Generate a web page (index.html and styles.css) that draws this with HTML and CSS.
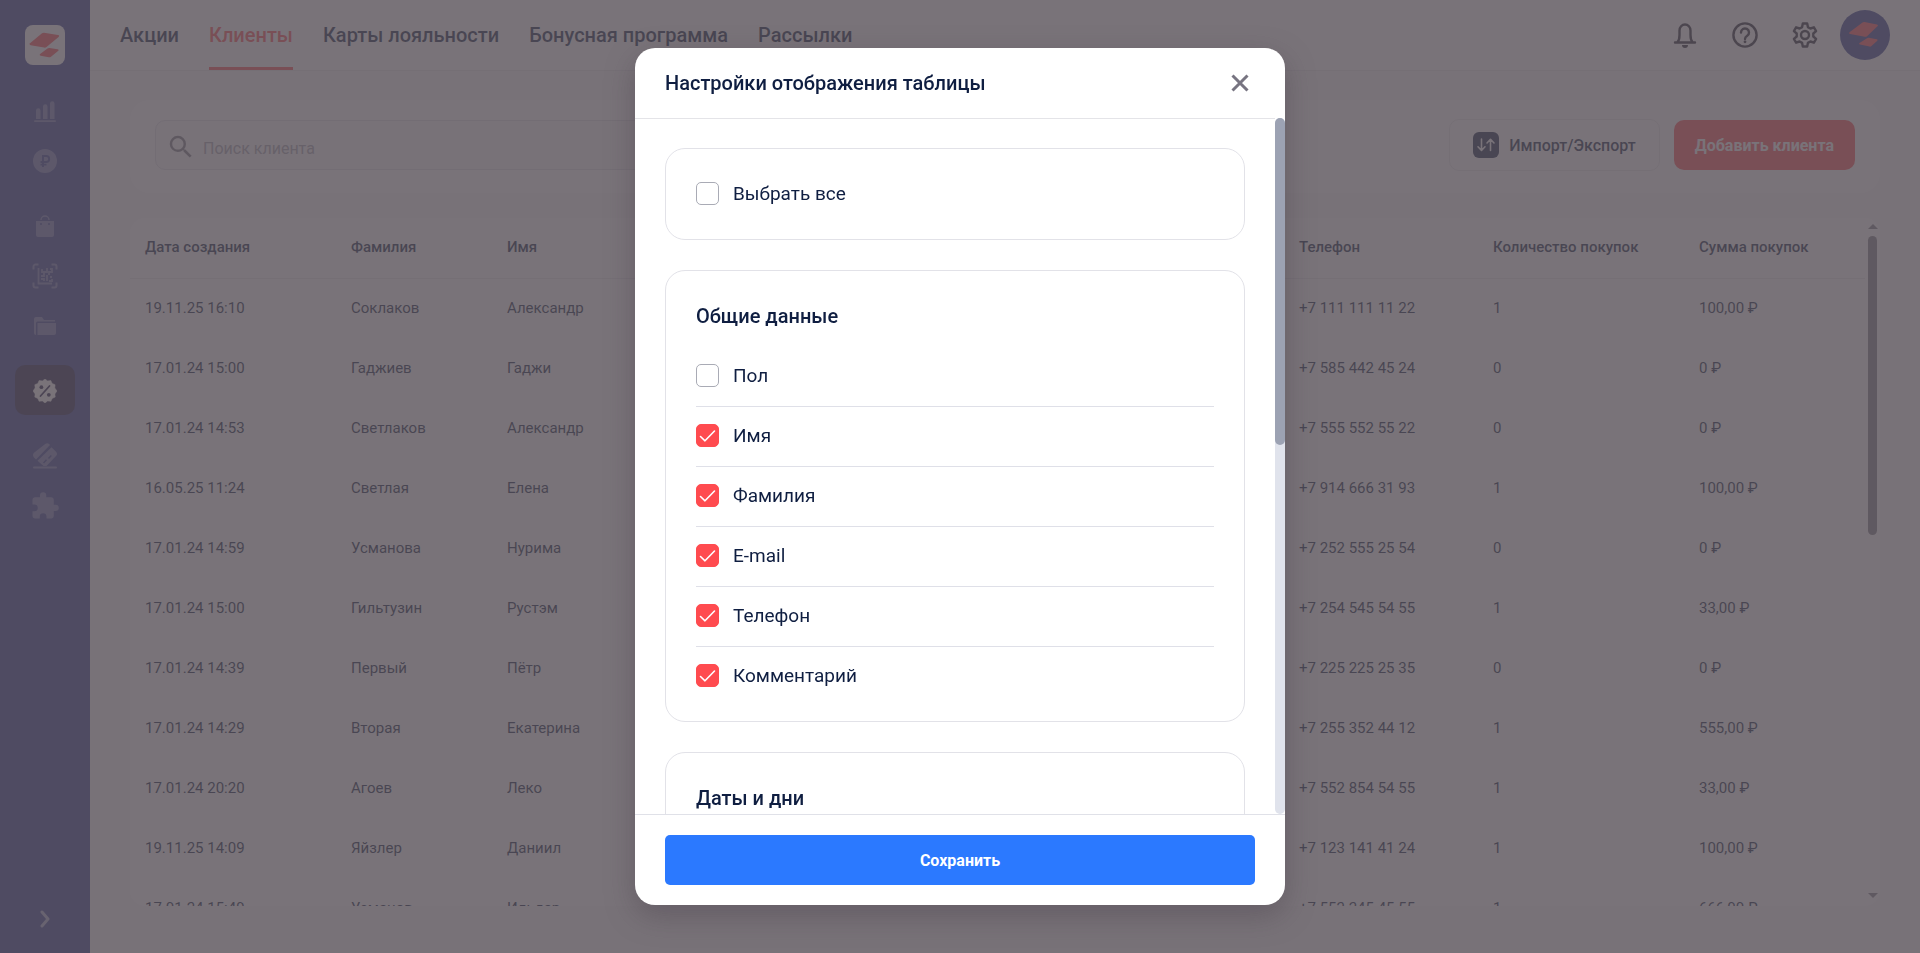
FILE: index.html
```html
<!DOCTYPE html>
<html lang="ru">
<head>
<meta charset="utf-8">
<title>Клиенты</title>
<link rel="stylesheet" href="styles.css">
</head>
<body>
<div class="app">
  <aside class="sidebar">
    <a class="logo" href="#" aria-label="Главная">
      <svg width="40" height="40" viewBox="0 0 40 40" fill="#ff4b4f"><path d="M17 8.200q1-.6 2-.5l14 2.200q2 .5.600 2L21.500 22q-1 .8-2.400.600L5.600 20.300Q3.800 19.800 5 18.300z"/><path d="M22.500 23.500q1-.7 2-.5l8 1.300q2 .5.500 1.800L26 31.700q-1 .8-2.300.600l-8-1.500q-2-.6-.6-1.800z"/></svg>
    </a>
    <nav class="side-nav">
      <div class="side-group">
        <a class="side-link" href="#" aria-label="Статистика"><svg width="24" height="24" viewBox="0 0 24 24" fill="currentColor"><path d="M3 20v-8.500a2 2 0 0 1 4.500 0V20zM10 20V7.500a2 2 0 0 1 4.500 0V20zM17 20V4.500a2 2 0 0 1 4.500 0V20z"/><rect x="1" y="21.200" width="22" height="1.800" rx=".9"/></svg></a>
        <a class="side-link" href="#" aria-label="Финансы"><svg width="24" height="24" viewBox="0 0 24 24"><circle cx="12" cy="12" r="12" fill="currentColor"/><path d="M10 18V7h3.200a3 3 0 0 1 0 6H7.500M7.500 15.600h6" fill="none" stroke="#2d388d" stroke-width="1.900"/></svg></a>
      </div>
      <div class="side-group">
        <a class="side-link" href="#" aria-label="Товары"><svg width="24" height="24" viewBox="0 0 24 24"><path d="M8 6a4 4 0 0 1 8 0" fill="none" stroke="currentColor" stroke-width="1.400"/><path d="M3 7h18v14a2 2 0 0 1-2 2H5a2 2 0 0 1-2-2z" fill="currentColor"/><g fill="#2d388d"><circle cx="8" cy="10" r="1"/><circle cx="16" cy="10" r="1"/></g></svg></a>
        <a class="side-link" href="#" aria-label="Маркировка"><svg width="26" height="26" viewBox="0 0 26 26" fill="none" stroke="currentColor"><path d="M1.500 6.500v-3a2 2 0 0 1 2-2h3M19.500 1.500h3a2 2 0 0 1 2 2v3M24.500 19.500v3a2 2 0 0 1-2 2h-3M6.500 24.500h-3a2 2 0 0 1-2-2v-3" stroke-width="2"/><path d="M6.500 5v15.500H20M10 6v3h2M15 5v4h-3v4H9M18 6h2v3h-3v3M9 16h3v2M15 12v6M18 14h2M17 18h3v-2" stroke-width="1.800"/></svg></a>
        <a class="side-link" href="#" aria-label="Каталог"><svg width="24" height="24" viewBox="0 0 24 24" fill="currentColor"><path d="M1 5q0-2 2-2h6l2 3h11v1.500H4.500q-1.500 0-1.500 2V21q-2 0-2-2z"/><path d="M4.500 9H23v10q0 2-2 2H4.500z"/></svg></a>
      </div>
      <div class="side-group">
        <a class="side-link side-link--active" href="#" aria-label="Лояльность"><svg width="24" height="24" viewBox="0 0 24 24"><path fill="currentColor" d="M12 0l2.600 1.900 3.200-.4 1.300 2.900 3 1.300-.3 3.200L24 12l-2.100 2.900.3 3.200-3 1.300-1.300 2.900-3.300-.4L12 24l-2.600-2.100-3.300.4-1.300-2.900-3-1.300.3-3.200L0 12l2.100-3.100-.3-3.200 3-1.300 1.300-2.900 3.300.4z" stroke="currentColor" stroke-width=".5" stroke-linejoin="round"/><path d="M7.500 17L16.500 7" stroke="#201c48" stroke-width="1.800" stroke-linecap="round"/><g fill="#201c48"><circle cx="8.400" cy="8.200" r="1.900"/><circle cx="15.800" cy="15.800" r="1.900"/></g></svg></a>
      </div>
      <div class="side-group">
        <a class="side-link" href="#" aria-label="Карты"><svg width="24" height="26" viewBox="0 0 24 26" fill="currentColor"><path d="M12.500.8q1.800-1.400 3.600.3L17 2 3 16.500l-2-2Q-1 12 1 9.800z"/><path d="M18.500 4.200l4.500 4.500q2 2.200 0 4.400L13.500 23h-3L4.500 17.700z"/><path d="M10.500 20l3-3.200M15.500 15.500l2.800-3" stroke="#2d388d" stroke-width="1.500"/><rect x="0" y="23.500" width="24" height="2" rx="1"/></svg></a>
        <a class="side-link" href="#" aria-label="Расширения"><svg width="30" height="30" viewBox="0 0 24 24" fill="currentColor"><path d="M20.500 11H19V7c0-1.100-.9-2-2-2h-4V3.500a2.500 2.500 0 0 0-5 0V5H4c-1.100 0-2 .9-2 2v3.800h1.500a2.700 2.700 0 0 1 0 5.400H2V20c0 1.100.9 2 2 2h3.800v-1.500a2.700 2.700 0 0 1 5.400 0V22H17c1.100 0 2-.9 2-2v-4h1.500a2.500 2.500 0 0 0 0-5z"/></svg></a>
      </div>
    </nav>
    <button class="side-toggle" type="button" aria-label="Развернуть меню"><svg width="10" height="18" viewBox="0 0 10 18" fill="none" stroke="currentColor" stroke-width="3" stroke-linecap="round" stroke-linejoin="round"><path d="M2 2l6 7-6 7"/></svg></button>
  </aside>

  <div class="page">
    <header class="topbar">
      <nav class="tabs">
        <a class="tab" href="#">Акции</a>
        <a class="tab tab--active" href="#">Клиенты</a>
        <a class="tab" href="#">Карты лояльности</a>
        <a class="tab" href="#">Бонусная программа</a>
        <a class="tab" href="#">Рассылки</a>
      </nav>
      <div class="tools">
        <button class="tool" type="button" aria-label="Уведомления"><svg width="24" height="26" viewBox="0 0 24 26"><path d="M2 20.500h20M4.500 20C6 18.500 6.500 16 6.500 13V8.500a5.500 6 0 0 1 11 0V13c0 3 .5 5.500 2 7" fill="none" stroke="currentColor" stroke-width="2.400" stroke-linecap="round"/><path d="M9 23h6a3 3 0 0 1-6 0z" fill="currentColor"/></svg></button>
        <button class="tool" type="button" aria-label="Помощь"><svg width="26" height="26" viewBox="0 0 26 26" fill="none" stroke="currentColor" stroke-width="2.400"><circle cx="13" cy="13" r="11.600"/><path d="M9 10.500a4 4 0 1 1 6.200 3.300c-1.400.9-2.200 1.700-2.200 3.200" stroke-linecap="round"/><circle cx="13" cy="19.800" r="1.400" fill="currentColor" stroke="none"/></svg></button>
        <button class="tool" type="button" aria-label="Настройки"><svg width="26" height="26" viewBox="0 0 26 26" fill="none" stroke="currentColor" stroke-width="2.400" stroke-linejoin="round"><circle cx="13" cy="13" r="4"/><path d="M10.800 1.500h4.400l.7 3.600 2.500 1.400 3.500-1.200 2.200 3.800-2.800 2.400v3l2.800 2.400-2.200 3.800-3.500-1.200-2.500 1.400-.7 3.600h-4.400l-.7-3.600-2.500-1.400-3.500 1.200-2.200-3.800 2.800-2.400v-3L1.900 9.100l2.200-3.800 3.500 1.200 2.500-1.400z"/></svg></button>
        <a class="avatar" href="#" aria-label="Профиль"><svg width="50" height="50" viewBox="0 0 50 50" fill="#ff4b4f"><path d="M22.500 12.500q1-.7 2-.5l12.500 2.500q1.800.5.500 1.700L27 26.200q-1 .8-2.300.500L10 24q-1.800-.5-.5-1.700z"/><path d="M27 28.200q.8-.6 1.800-.5l8 1.500q1.500.4.500 1.500L31.500 36q-.8.800-2 .6l-9.500-2q-1.700-.5-.5-1.500z"/></svg></a>
      </div>
    </header>

    <main class="content">
      <section class="filters">
        <div class="search">
          <svg width="30" height="30" viewBox="0 0 24 24" fill="currentColor"><path d="M15.500 14h-.79l-.28-.27A6.471 6.471 0 0 0 16 9.500 6.500 6.500 0 1 0 9.500 16c1.610 0 3.090-.59 4.230-1.570l.27.28v.79l5 4.990L20.490 19l-4.990-5zm-6 0C7.010 14 5 11.990 5 9.500S7.010 5 9.500 5 14 7.010 14 9.500 11.990 14 9.500 14z"/></svg>
          <input class="search-input" type="text" placeholder="Поиск клиента" aria-label="Поиск клиента">
        </div>
        <div class="actions">
          <button class="btn btn--outline" type="button"><svg width="26" height="26" viewBox="0 0 26 26"><rect width="26" height="26" rx="6" fill="currentColor"/><path d="M8.500 7v11M5 14.800L8.500 18.500l3.500-3.700M17.500 18.500V7.500M14 11l3.500-3.700L21 11" fill="none" stroke="#fff" stroke-width="1.600" stroke-linecap="round" stroke-linejoin="round"/></svg>Импорт/Экспорт</button>
          <button class="btn btn--danger" type="button">Добавить клиента</button>
        </div>
      </section>

      <section class="table-card">
        <div class="table-wrap">
          <table class="clients">
            <colgroup><col class="c-date"><col class="c-last"><col><col class="c-phone"><col class="c-count"><col class="c-sum"></colgroup>
            <thead><tr><th>Дата создания</th><th>Фамилия</th><th>Имя</th><th>Телефон</th><th>Количество покупок</th><th>Сумма покупок</th></tr></thead>
            <tbody>
              <tr><td>19.11.25 16:10</td><td>Соклаков</td><td>Александр</td><td>+7 111 111 11 22</td><td>1</td><td>100,00 ₽</td></tr>
              <tr><td>17.01.24 15:00</td><td>Гаджиев</td><td>Гаджи</td><td>+7 585 442 45 24</td><td>0</td><td>0 ₽</td></tr>
              <tr><td>17.01.24 14:53</td><td>Светлаков</td><td>Александр</td><td>+7 555 552 55 22</td><td>0</td><td>0 ₽</td></tr>
              <tr><td>16.05.25 11:24</td><td>Светлая</td><td>Елена</td><td>+7 914 666 31 93</td><td>1</td><td>100,00 ₽</td></tr>
              <tr><td>17.01.24 14:59</td><td>Усманова</td><td>Нурима</td><td>+7 252 555 25 54</td><td>0</td><td>0 ₽</td></tr>
              <tr><td>17.01.24 15:00</td><td>Гильтузин</td><td>Рустэм</td><td>+7 254 545 54 55</td><td>1</td><td>33,00 ₽</td></tr>
              <tr><td>17.01.24 14:39</td><td>Первый</td><td>Пётр</td><td>+7 225 225 25 35</td><td>0</td><td>0 ₽</td></tr>
              <tr><td>17.01.24 14:29</td><td>Вторая</td><td>Екатерина</td><td>+7 255 352 44 12</td><td>1</td><td>555,00 ₽</td></tr>
              <tr><td>17.01.24 20:20</td><td>Агоев</td><td>Леко</td><td>+7 552 854 54 55</td><td>1</td><td>33,00 ₽</td></tr>
              <tr><td>19.11.25 14:09</td><td>Яйзлер</td><td>Даниил</td><td>+7 123 141 41 24</td><td>1</td><td>100,00 ₽</td></tr>
              <tr><td>17.01.24 15:49</td><td>Усманов</td><td>Ильдар</td><td>+7 552 245 45 55</td><td>1</td><td>666,00 ₽</td></tr>
            </tbody>
          </table>
        </div>
        <div class="scroll">
          <span class="scroll-up"></span>
          <div class="scroll-track"><div class="scroll-thumb"></div></div>
          <span class="scroll-down"></span>
        </div>
      </section>
    </main>
  </div>
</div>

<div class="overlay">
  <div class="modal" role="dialog" aria-modal="true" aria-labelledby="modal-title">
    <header class="modal-head">
      <h2 class="modal-title" id="modal-title">Настройки отображения таблицы</h2>
      <button class="close" type="button" aria-label="Закрыть"><svg width="18" height="18" viewBox="0 0 18 18" stroke="currentColor" stroke-width="3"><path d="M1.500 1.500l15 15M16.500 1.500l-15 15"/></svg></button>
    </header>
    <div class="modal-body">
      <div class="modal-content">
        <section class="card">
          <label class="check"><input type="checkbox">Выбрать все</label>
        </section>
        <section class="card">
          <h3 class="card-title">Общие данные</h3>
          <ul class="options">
            <li><label class="check"><input type="checkbox">Пол</label></li>
            <li><label class="check"><input type="checkbox" checked>Имя</label></li>
            <li><label class="check"><input type="checkbox" checked>Фамилия</label></li>
            <li><label class="check"><input type="checkbox" checked>E-mail</label></li>
            <li><label class="check"><input type="checkbox" checked>Телефон</label></li>
            <li><label class="check"><input type="checkbox" checked>Комментарий</label></li>
          </ul>
        </section>
        <section class="card">
          <h3 class="card-title">Даты и дни</h3>
        </section>
      </div>
      <div class="modal-track"><div class="modal-thumb"></div></div>
    </div>
    <footer class="modal-foot">
      <button class="save" type="button">Сохранить</button>
    </footer>
  </div>
</div>
</body>
</html>
```

FILE: styles.css
```css
*, *::before, *::after { box-sizing: border-box; }

body {
  margin: 0;
  font-family: Roboto, "Liberation Sans", sans-serif;
  font-size: 15px;
  color: #0f1e41;
  background: #f8f8fa;
  overflow: hidden;
}

button, input { font: inherit; color: inherit; }
button { border: 0; background: none; padding: 0; cursor: pointer; }
a { color: inherit; text-decoration: none; }
svg { display: block; flex: none; }

.app { display: flex; height: 100vh; }

/* Sidebar */
.sidebar {
  flex: none;
  width: 90px;
  padding: 25px 15px 20px;
  display: flex;
  flex-direction: column;
  align-items: center;
  background: #2d388d;
}
.logo { width: 40px; height: 40px; border-radius: 8px; background: #fff; overflow: hidden; }
.side-nav { margin-top: 20px; display: flex; flex-direction: column; gap: 15px; }
.side-link {
  width: 60px;
  height: 50px;
  padding-top: 2px;
  display: flex;
  align-items: center;
  justify-content: center;
  border-radius: 10px;
  color: #757bb4;
}
.side-link--active { background: #201c48; color: #fff; }
.side-toggle { margin-top: auto; height: 28px; color: #a9add0; }

/* Header */
.page { flex: 1; min-width: 0; display: flex; flex-direction: column; }
.topbar {
  height: 71px;
  flex: none;
  padding: 0 30px;
  display: flex;
  justify-content: space-between;
  background: #fff;
  border-bottom: 1px solid #e8e8ec;
}
.tabs { display: flex; gap: 30px; }
.tab {
  display: flex;
  align-items: center;
  padding-top: 3px;
  border-bottom: 3px solid transparent;
  font-size: 20px;
  font-weight: 500;
}
.tab--active { color: #ff4b4f; border-color: #ff4b4f; }
.tools { display: flex; align-items: center; }
.tool { width: 60px; height: 50px; display: flex; align-items: center; justify-content: center; color: #20222f; }
.avatar { margin-left: 5px; width: 50px; height: 50px; border-radius: 50%; background: #2d388d; }

/* Filters */
.content {
  flex: 1;
  min-height: 0;
  padding: 29px 40px 47px;
  display: flex;
  flex-direction: column;
  gap: 25px;
}
.filters {
  flex: none;
  padding: 19px 25px 22px;
  display: flex;
  align-items: center;
  justify-content: space-between;
  background: #fff;
  border-radius: 20px;
}
.search {
  width: 600px;
  height: 50px;
  padding: 3px 10px 0;
  display: flex;
  align-items: center;
  gap: 7px;
  background: #f8f8fa;
  border: 1px solid #e0e0e6;
  border-radius: 10px;
  color: #7b7b84;
}
.search-input { flex: 1; border: 0; background: none; padding: 4px 0 0; font-size: 16px; outline: 0; }
.search-input::placeholder { color: #a4a4ae; opacity: 1; }
.actions { display: flex; align-items: center; gap: 14px; }
.btn { display: flex; align-items: center; font-size: 16px; border-radius: 10px; }
.btn--outline { height: 52px; padding: 0 23px; gap: 10px; border: 1px solid #e8e8ec; font-weight: 500; }
.btn--danger { height: 50px; padding: 0 21px; background: #ff4b4f; color: #fff; font-weight: 700; }

/* Clients table */
.table-card { flex: 1; min-height: 0; display: flex; background: #fff; border-radius: 15px; overflow: hidden; }
.table-wrap { flex: 1; min-width: 0; overflow: hidden; }
.clients { width: 100%; table-layout: fixed; border-collapse: separate; border-spacing: 0; }
.c-date { width: 206px; }
.c-last { width: 156px; }
.c-phone { width: 194px; }
.c-count { width: 206px; }
.c-sum { width: 181px; }
.clients th, .clients td { padding: 0 15px 2px; height: 60px; text-align: left; white-space: nowrap; }
.clients th { height: 61px; font-weight: 500; border-bottom: 1px solid #e8e8ec; }
.scroll { flex: none; width: 15px; padding: 6px 0 8px; display: flex; flex-direction: column; align-items: center; }
.scroll-up, .scroll-down { border: 5px solid transparent; }
.scroll-up { border-top: 0; border-bottom-color: #7e7e86; }
.scroll-down { border-bottom: 0; border-top-color: #7e7e86; }
.scroll-track { flex: 1; padding: 7px 0; }
.scroll-thumb { width: 9px; height: 46%; border-radius: 5px; background: #7e7e86; }

/* Modal */
.overlay {
  position: fixed;
  inset: 0;
  display: flex;
  align-items: center;
  justify-content: center;
  background: rgba(88, 80, 88, .8);
}
.modal {
  width: 650px;
  height: 90vh;
  display: flex;
  flex-direction: column;
  background: #fff;
  border-radius: 20px;
  box-shadow: 0 10px 30px rgba(60, 50, 60, .35);
  overflow: hidden;
}
.modal-head {
  flex: none;
  height: 70px;
  padding: 0 36px 0 30px;
  display: flex;
  align-items: center;
  justify-content: space-between;
}
.modal-title, .card-title { margin: 0; font-size: 20px; line-height: 30px; font-weight: 500; }
.close { color: #777481; }
.modal-body { flex: 1; min-height: 0; display: flex; }
.modal-content {
  flex: 1;
  padding: 29px 30px;
  display: flex;
  flex-direction: column;
  gap: 30px;
  overflow: hidden;
  border-top: 1px solid #e4e4e8;
}
.card { flex: none; padding: 30px; border: 1px solid #e2e2e8; border-radius: 20px; }
.options { list-style: none; margin: 30px 0 0; padding: 0; display: flex; flex-direction: column; gap: 14px; }
.options li { padding-bottom: 15px; border-bottom: 1px solid #dfe0e8; }
.options li:last-child { padding: 0; border: 0; }
.check { height: 30px; display: flex; align-items: center; gap: 14px; font-size: 19px; }
.check input {
  appearance: none;
  flex: none;
  width: 23px;
  height: 23px;
  margin: 0;
  border: 1px solid #a9abb5;
  border-radius: 5px;
  background: #fff;
}
.check input:checked {
  border-color: #ff4b4f;
  background: #ff4b4f url("data:image/svg+xml,%3Csvg xmlns='http://www.w3.org/2000/svg' viewBox='0 0 23 23' fill='none' stroke='white' stroke-width='1.600' stroke-linecap='round' stroke-linejoin='round'%3E%3Cpath d='M4.500 12.500l4.500 4.300L18.500 7'/%3E%3C/svg%3E") center / 23px 23px no-repeat;
}
.modal-track { flex: none; width: 10px; background: #e0e3ec; border-radius: 5px; }
.modal-thumb { height: 47%; border-radius: 5px; background: #9ca2b3; }
.modal-foot { flex: none; padding: 20px 30px; border-top: 1px solid #e0e1e8; }
.save {
  width: 100%;
  height: 50px;
  border-radius: 5px;
  background: #2b79ff;
  color: #fff;
  font-size: 16px;
  font-weight: 700;
}
```
